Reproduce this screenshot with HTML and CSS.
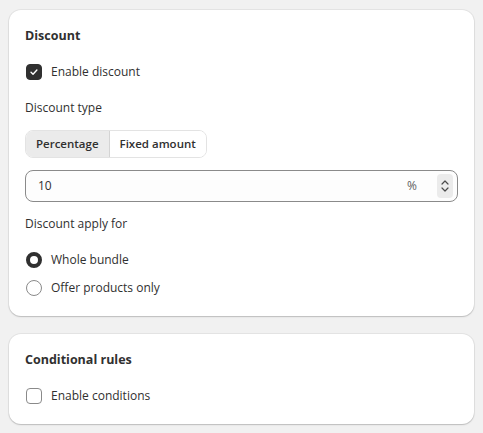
FILE: index.html
```html
<!DOCTYPE html>
<html lang="en">
<head>
    <meta charset="UTF-8">
    <title>Discount settings</title>
    <link rel="stylesheet" href="styles.css">
</head>
<body>

    <div class="page">
        <!-- Discount card -->
        <section class="card">
            <h2 class="card-title">Discount</h2>

            <label class="choice">
                <span class="checkbox checked">
                    <svg viewBox="0 0 16 16" width="16" height="16"><path d="M4.6 8.3l2.3 2.2 4.4-4.8" fill="none" stroke="#fff" stroke-width="1.6" stroke-linecap="round" stroke-linejoin="round"/></svg>
                </span>
                Enable discount
            </label>

            <div class="fields">
                <div class="label">Discount type</div>
                <div class="segmented">
                    <button class="seg-btn active">Percentage</button>
                    <button class="seg-btn">Fixed amount</button>
                </div>
                <div class="number-input">
                    <span class="value">10</span>
                    <span class="suffix">%</span>
                    <span class="spinner">
                        <svg viewBox="0 0 10 8" width="10" height="8"><path d="M2 6l3-3 3 3" fill="none" stroke="#4a4a4a" stroke-width="1.2" stroke-linecap="round" stroke-linejoin="round"/></svg>
                        <svg viewBox="0 0 10 8" width="10" height="8"><path d="M2 2l3 3 3-3" fill="none" stroke="#4a4a4a" stroke-width="1.2" stroke-linecap="round" stroke-linejoin="round"/></svg>
                    </span>
                </div>
                <div class="label">Discount apply for</div>
                <div class="choice-list">
                    <label class="choice">
                        <span class="radio checked"></span>
                        Whole bundle
                    </label>
                    <label class="choice">
                        <span class="radio"></span>
                        Offer products only
                    </label>
                </div>
            </div>
        </section>

        <!-- Conditional rules card -->
        <section class="card card-small">
            <h2 class="card-title">Conditional rules</h2>
            <label class="choice">
                <span class="checkbox"></span>
                Enable conditions
            </label>
        </section>
    </div>

</body>
</html>
```

FILE: styles.css
```css
* {
    box-sizing: border-box;
}

html, body {
    height: 100%;
}

body {
    margin: 0;
    background: #f1f1f1;
    font-family: "Open Sans", sans-serif;
    font-size: 12px;
    line-height: 20px;
    color: #303030;
}

.page {
    display: flex;
    flex-direction: column;
    gap: 18px;
    padding: 10px 9px;
}

/*--------------------
Card
--------------------*/
.card {
    background: #fff;
    border-radius: 12px;
    box-shadow: 0 1px 0 rgba(26, 26, 26, 0.07), 0 0 0 1px rgba(0, 0, 0, 0.05), 0 1px 2px rgba(0, 0, 0, 0.12);
    padding: 16px 16px 18px;
    display: flex;
    flex-direction: column;
    gap: 16px;
}

.card-title {
    margin: 0;
    font-size: 12.5px;
    font-weight: 700;
    line-height: 20px;
}

/*--------------------
Choices
--------------------*/
.choice {
    display: flex;
    align-items: center;
    gap: 9px;
    height: 20px;
    padding-left: 1px;
}

.checkbox {
    width: 16px;
    height: 16px;
    border: 1px solid #8a8a8a;
    border-radius: 4px;
    background: #fff;
    display: flex;
    align-items: center;
    justify-content: center;
}

.checkbox.checked {
    background: #303030;
    border-color: #303030;
}

.radio {
    width: 16px;
    height: 16px;
    border: 1px solid #8a8a8a;
    border-radius: 50%;
    background: #fff;
}

.radio.checked {
    border: 4.5px solid #303030;
}

.choice-list {
    display: flex;
    flex-direction: column;
    gap: 8px;
    margin-top: 4px;
}

/*--------------------
Fields
--------------------*/
.fields {
    display: flex;
    flex-direction: column;
    gap: 12px;
}

.label {
    line-height: 20px;
}

.segmented {
    display: flex;
    align-self: flex-start;
    border: 1px solid #e3e3e3;
    border-radius: 8px;
    overflow: hidden;
    height: 28px;
}

.seg-btn {
    font: inherit;
    font-size: 11.5px;
    font-weight: 600;
    color: #303030;
    background: #fff;
    border: none;
    padding: 0 10px;
}

.seg-btn.active {
    background: #ebebeb;
    border-right: 1px solid #d4d4d4;
}

.number-input {
    display: flex;
    align-items: center;
    height: 32px;
    border: 1px solid #8a8a8a;
    border-radius: 8px;
    background: #fdfdfd;
    padding: 0 4px 0 12px;
}

.number-input .value {
    flex: 1;
}

.number-input .suffix {
    color: #616161;
    margin-right: 20px;
}

.spinner {
    display: flex;
    flex-direction: column;
    align-items: center;
    justify-content: center;
    width: 16px;
    height: 24px;
    background: #ebebeb;
    border-radius: 4px;
}
```
